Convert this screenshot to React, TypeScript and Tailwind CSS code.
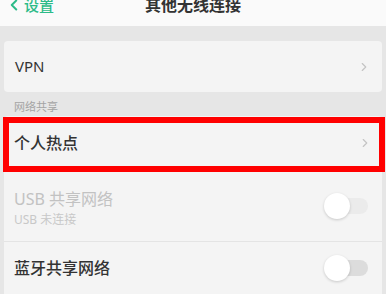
import { ChevronLeft, ChevronRight } from "lucide-react";

const font = "font-['Noto_Sans','Noto_Sans_CJK_SC',sans-serif]";

function Toggle({ dark }: { dark?: boolean }) {
  return (
    <div className="relative w-[46px] h-[26px] flex items-center">
      <div
        className={
          "ml-[8px] w-[36px] h-[16px] rounded-full " +
          (dark ? "bg-[#dcdcdc]" : "bg-[#ebebeb]")
        }
      />
      <div className="absolute left-0 top-0 w-[26px] h-[26px] rounded-full bg-white shadow-[0_1px_3px_rgba(0,0,0,0.18)]" />
    </div>
  );
}

export default function App() {
  return (
    <div className={"relative w-[386px] h-[294px] overflow-hidden bg-[#e6e6e6] flex flex-col " + font}>
      {/* top bar, clipped at the top edge */}
      <div className="h-[26px] shrink-0 bg-[#fafafa] overflow-hidden">
        <div className="relative h-[24px] -mt-[7px] flex items-center justify-center">
          <div className="absolute left-[5px] flex items-center text-[#2cbb88]">
            <ChevronLeft className="w-[18px] h-[18px]" strokeWidth={2.6} />
            <span className="text-[15px] font-medium ml-[1px]">设置</span>
          </div>
          <span className="text-[16px] font-semibold text-[#333]">其他无线连接</span>
        </div>
      </div>

      {/* VPN */}
      <div className="mt-[15px] mx-[4px] h-[52px] rounded-[4px] bg-[#f4f4f4] flex items-center justify-between px-[11px]">
        <span className="text-[15px] text-[#333]">VPN</span>
        <ChevronRight className="w-[14px] h-[14px] text-[#c4c4c4]" strokeWidth={2} />
      </div>

      {/* section label */}
      <div className="h-[24px] flex items-end pb-[1px] px-[14px]">
        <span className="text-[11px] text-[#a4a4a4]">网络共享</span>
      </div>

      {/* sharing card */}
      <div className="mx-[4px] flex-1 rounded-t-[4px] bg-[#f4f4f4] flex flex-col">
        <div className="h-[54px] flex items-center justify-between px-[10px]">
          <span className="text-[16px] font-medium text-[#333]">个人热点</span>
          <ChevronRight className="w-[14px] h-[14px] text-[#c4c4c4]" strokeWidth={2} />
        </div>
        <div className="h-[72px] flex items-center justify-between pl-[10px] pr-[12px] border-b border-[#e4e4e4]">
          <div className="flex flex-col pt-[7px]">
            <span className="text-[16px] leading-[22px] text-[#c2c2c2]">USB 共享网络</span>
            <span className="text-[12px] leading-[20px] text-[#c8c8c8]">USB 未连接</span>
          </div>
          <Toggle />
        </div>
        <div className="h-[52px] flex items-center justify-between pl-[10px] pr-[12px]">
          <span className="text-[16px] font-medium text-[#333]">蓝牙共享网络</span>
          <Toggle dark />
        </div>
      </div>

      {/* highlight annotation */}
      <div className="absolute left-[3px] top-[117px] w-[382px] h-[55px] border-[6px] border-[#ff0000]" />
    </div>
  );
}
